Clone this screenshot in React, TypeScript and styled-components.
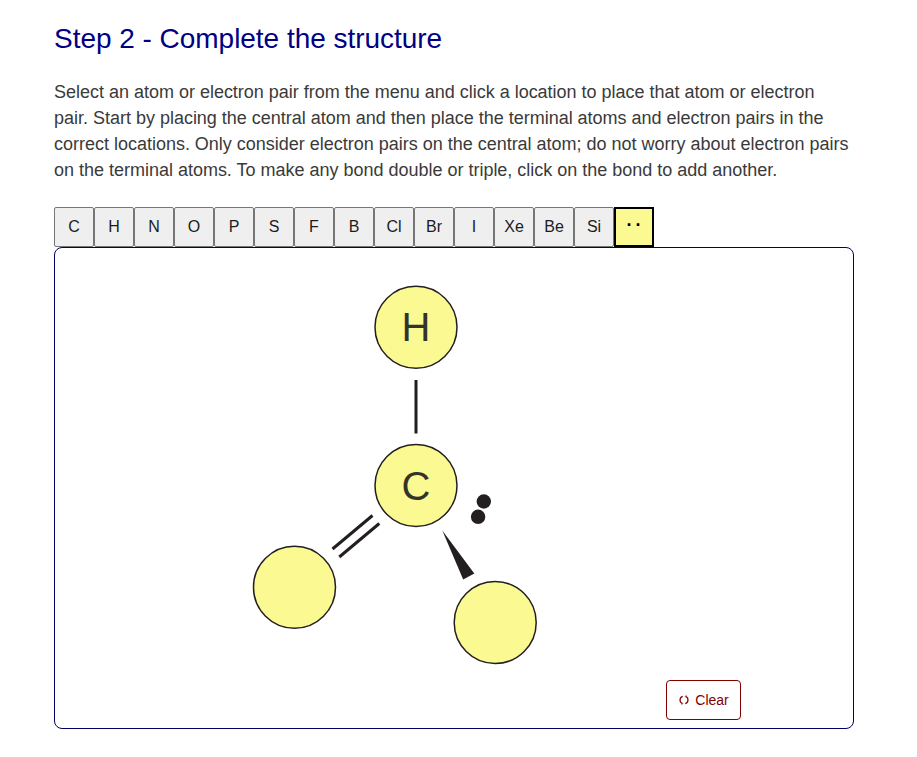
import React, { useState } from "react";
import styled, { createGlobalStyle } from "styled-components";

const GlobalStyle = createGlobalStyle`
  * { box-sizing: border-box; }
  body {
    margin: 0;
    background: #fff;
    font-family: "Liberation Sans", Arial, sans-serif;
  }
`;

const Page = styled.main`
  width: 800px;
  margin-left: 54px;
  padding-top: 22px;
`;

const Title = styled.h1`
  margin: 0;
  color: #000080;
  font-size: 28px;
  font-weight: 400;
  line-height: 34px;
  letter-spacing: -0.03px;
  white-space: nowrap;
`;

const Instructions = styled.p`
  margin: 23px 0 24px;
  color: #3a3a3a;
  font-size: 18px;
  line-height: 26px;
  letter-spacing: -0.01px;
  white-space: nowrap;
`;

const Menu = styled.div`
  display: flex;
`;

const AtomButton = styled.button<{ $selected: boolean }>`
  width: 40px;
  height: 40px;
  padding: 0;
  border: ${(p) => (p.$selected ? "2px solid #000" : "1px solid #767676")};
  border-radius: ${(p) => (p.$selected ? "0" : "2px")};
  background: ${(p) => (p.$selected ? "#fbfa92" : "#efefef")};
  color: #1c1c1c;
  font-family: inherit;
  font-size: 16px;
  line-height: 18px;
`;

const PairLabel = styled.span`
  display: block;
  padding-left: 3px;
  margin-top: -4px;
  color: #000;
  font-size: 18px;
  font-weight: 700;
  letter-spacing: 3px;
`;

const Board = styled.section`
  display: flex;
  flex-direction: column;
  height: 482px;
  border: 1px solid #000066;
  border-radius: 8px;
`;

const Drawing = styled.svg`
  display: block;
  width: 798px;
  height: 432px;
  flex: none;
`;

const Atom = styled.circle`
  fill: #fbfa92;
  stroke: #231f20;
  stroke-width: 1.5;
`;

const AtomLabel = styled.text`
  fill: #333329;
  font-size: 40px;
  text-anchor: middle;
`;

const Bond = styled.line`
  stroke: #231f20;
  stroke-width: 3;
`;

const Solid = styled.g`
  fill: #231f20;
`;

const ClearButton = styled.button`
  display: flex;
  align-items: center;
  justify-content: center;
  gap: 6px;
  width: 75px;
  height: 40px;
  margin-left: 611px;
  padding: 0 0 0 1px;
  border: 1px solid #800000;
  border-radius: 4px;
  background: #fff;
  color: #800000;
  font-family: inherit;
  font-size: 14px;
`;

const choices = ["C", "H", "N", "O", "P", "S", "F", "B", "Cl", "Br", "I", "Xe", "Be", "Si", "··"];

const ResetIcon = () => (
  <svg width="10" height="10" viewBox="0 0 10 10" fill="none" stroke="currentColor" strokeWidth="1.3">
    <path d="M3.700 1.300C.300 2.300.300 7.200 2.800 8.300M6.300 8.700C9.700 7.700 9.700 2.800 7.200 1.700" />
    <path d="M2 9H3.700V7.600M8 1H6.300V2.400" strokeWidth=".7" />
  </svg>
);

export default function App() {
  const [selected, setSelected] = useState("··");
  return (
    <>
      <GlobalStyle />
      <Page>
        <Title>Step 2 - Complete the structure</Title>
        <Instructions>
          Select an atom or electron pair from the menu and click a location to place that atom or electron<br />
          pair. Start by placing the central atom and then place the terminal atoms and electron pairs in the<br />
          correct locations. Only consider electron pairs on the central atom; do not worry about electron pairs<br />
          on the terminal atoms. To make any bond double or triple, click on the bond to add another.
        </Instructions>
        <Menu>
          {choices.map((c) => (
            <AtomButton key={c} $selected={c === selected} onClick={() => setSelected(c)}>
              {c === "··" ? <PairLabel>{c}</PairLabel> : c}
            </AtomButton>
          ))}
        </Menu>
        <Board>
          <Drawing viewBox="55 248 798 432">
            <Bond x1="416" y1="380" x2="416" y2="433.500" />
            <Bond x1="332.500" y1="549" x2="372.500" y2="515.500" />
            <Bond x1="339.300" y1="557" x2="379.300" y2="523.500" />
            <Atom cx="416" cy="327.300" r="41" />
            <Atom cx="416" cy="485.500" r="41" />
            <Atom cx="294.500" cy="587.200" r="41" />
            <Atom cx="495.200" cy="622.500" r="41" />
            <AtomLabel x="416" y="341">H</AtomLabel>
            <AtomLabel x="416" y="500">C</AtomLabel>
            <Solid>
              <path d="M442.300 530.500L474.300 573.500L463.200 579.500Z" />
              <circle cx="483.800" cy="501.500" r="7.200" />
              <circle cx="478.100" cy="516.800" r="7.200" />
            </Solid>
          </Drawing>
          <ClearButton>
            <ResetIcon />
            Clear
          </ClearButton>
        </Board>
      </Page>
    </>
  );
}
